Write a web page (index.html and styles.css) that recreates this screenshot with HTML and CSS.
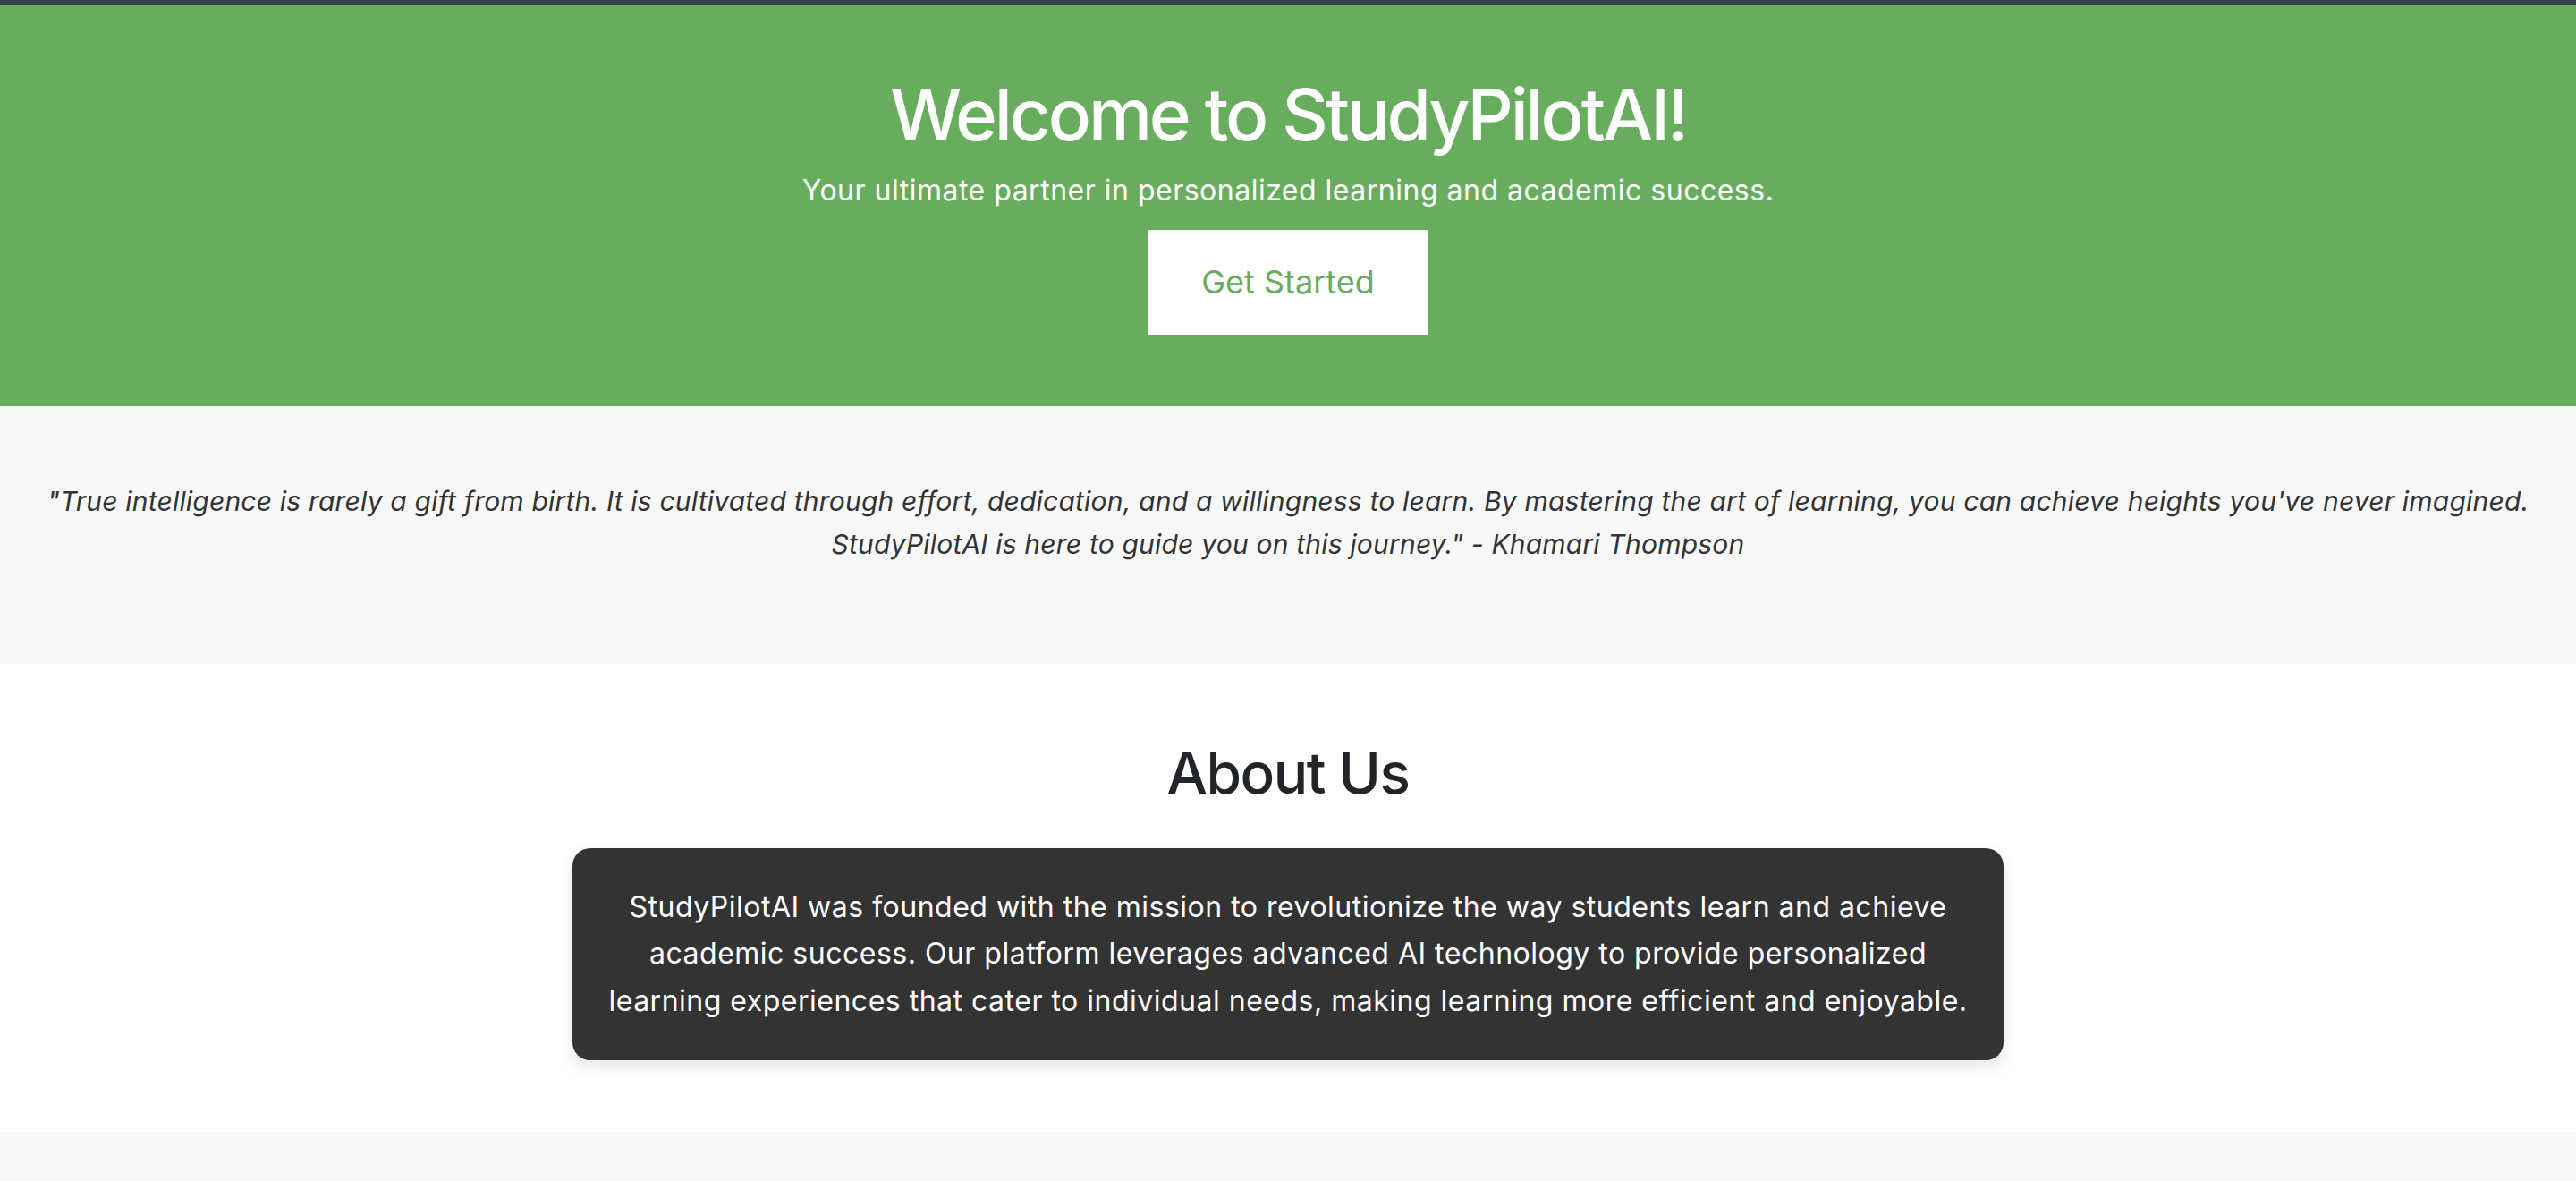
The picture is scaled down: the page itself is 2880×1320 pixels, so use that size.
FILE: index.html
```html
<!DOCTYPE html>
<html lang="en">
<head>
<meta charset="utf-8">
<title>StudyPilotAI</title>
<link rel="stylesheet" href="styles.css">
</head>
<body>
<div class="topbar"></div>
<header class="hero">
  <h1 class="hero-title">Welcome to StudyPilotAI!</h1>
  <p class="hero-sub">Your ultimate partner in personalized learning and academic success.</p>
  <a class="hero-btn" href="#">Get Started</a>
</header>
<section class="quote">
  <p class="quote-text">"True intelligence is rarely a gift from birth. It is cultivated through effort, dedication, and a willingness to learn. By mastering the art of learning, you can achieve heights you've never imagined. StudyPilotAI is here to guide you on this journey." - Khamari Thompson</p>
</section>
<section class="about">
  <h2 class="about-title">About Us</h2>
  <div class="about-card">
    <p class="about-text">StudyPilotAI was founded with the mission to revolutionize the way students learn and achieve academic success. Our platform leverages advanced AI technology to provide personalized learning experiences that cater to individual needs, making learning more efficient and enjoyable.</p>
  </div>
</section>
<section class="next"></section>
</body>
</html>
```

FILE: styles.css
```css
* { box-sizing: border-box; }
html, body { margin: 0; padding: 0; }
body {
  font-family: Inter, "Noto Sans", "Liberation Sans", sans-serif;
  line-height: 1.6;
  color: #212529;
  background: #fff;
}
.topbar { height: 6px; background: #383d50; }
.hero {
  background: #68ad5e;
  color: #fff;
  text-align: center;
  padding: 74px 40px 80px;
  display: flex;
  flex-direction: column;
  align-items: center;
}
.hero-title {
  margin: 0 0 11px;
  font-size: 80px;
  font-weight: 500;
  line-height: 1.2;
  letter-spacing: -3.2px;
}
.hero-sub {
  margin: 0 0 19px;
  font-size: 32px;
  letter-spacing: 0.5px;
}
.hero-btn {
  display: inline-block;
  background: #fff;
  color: #68ad5e;
  text-decoration: none;
  font-size: 36px;
  line-height: 57px;
  padding: 30px 60px;
}
.quote {
  background: #f8f8f8;
  padding: 82px 40px 78px;
  text-align: center;
}
.quote-text {
  margin: 0 0 32px;
  font-size: 30px;
  line-height: 48px;
  font-style: italic;
  color: #333;
  letter-spacing: 0.2px;
}
.about {
  background: #fff;
  padding: 84px 40px 80px;
  display: flex;
  flex-direction: column;
  align-items: center;
}
.about-title {
  margin: 0 0 45px;
  font-size: 64px;
  font-weight: 500;
  line-height: 1.2;
  letter-spacing: -1.5px;
}
.about-card {
  width: 1600px;
  background: #333;
  color: #fff;
  border-radius: 20px;
  padding: 40px;
  box-shadow: 0 8px 20px rgba(0,0,0,0.1);
  text-align: center;
}
.about-text {
  margin: 0;
  font-size: 32px;
  line-height: 52.5px;
  letter-spacing: 0.5px;
}
.next { background: #f8f8f8; height: 200px; }
```
